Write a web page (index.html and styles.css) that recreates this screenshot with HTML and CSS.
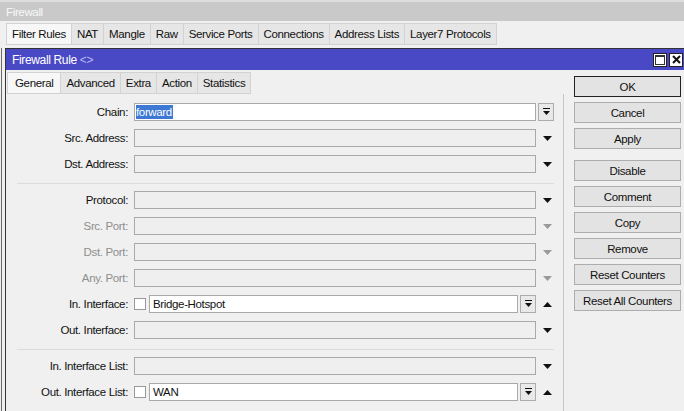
FILE: index.html
```html
<!DOCTYPE html>
<html lang="en">
<head>
    <meta charset="UTF-8">
    <meta name="viewport" content="width=device-width, initial-scale=1.0">
    <title>Firewall</title>
    <link rel="stylesheet" href="styles.css">
</head>
<body>
    <div class="screen">
        <div class="titlebar">Firewall</div>
        <div class="tabs outer-tabs">
            <div class="tab active">Filter Rules</div>
            <div class="tab">NAT</div>
            <div class="tab">Mangle</div>
            <div class="tab">Raw</div>
            <div class="tab">Service Ports</div>
            <div class="tab">Connections</div>
            <div class="tab">Address Lists</div>
            <div class="tab">Layer7 Protocols</div>
        </div>
        <div class="page">
            <div class="rule">
                <div class="rule-title">
                    <span>Firewall Rule <em>&lt;&gt;</em></span>
                    <div class="win-btns">
                        <div class="win-btn max"><i></i></div>
                        <div class="win-btn close">
                            <svg width="9" height="9" viewBox="0 0 9 9"><path d="M1 1L8 8M8 1L1 8" stroke="#111" stroke-width="2"/></svg>
                        </div>
                    </div>
                </div>
                <div class="rule-body">
                    <div class="form">
                        <div class="tabs inner-tabs">
                            <div class="tab active">General</div>
                            <div class="tab">Advanced</div>
                            <div class="tab">Extra</div>
                            <div class="tab">Action</div>
                            <div class="tab">Statistics</div>
                        </div>
                        <div class="fields">
                            <div class="section">
                                <div class="row">
                                    <label>Chain:</label>
                                    <div class="field"><div class="input white"><span class="sel">forward</span></div></div>
                                    <div class="side"><div class="drop"><svg width="9" height="8" viewBox="0 0 9 8"><path d="M1 0.5H8" stroke="#111"/><path d="M1 3H8L4.5 7Z" fill="#111"/></svg></div></div>
                                </div>
                                <div class="row">
                                    <label>Src. Address:</label>
                                    <div class="field"><div class="input"></div></div>
                                    <div class="side"><svg class="arrow" width="9" height="5" viewBox="0 0 9 5"><path d="M0 0H9L4.5 5Z"/></svg></div>
                                </div>
                                <div class="row">
                                    <label>Dst. Address:</label>
                                    <div class="field"><div class="input"></div></div>
                                    <div class="side"><svg class="arrow" width="9" height="5" viewBox="0 0 9 5"><path d="M0 0H9L4.5 5Z"/></svg></div>
                                </div>
                            </div>
                            <div class="sep"></div>
                            <div class="section">
                                <div class="row">
                                    <label>Protocol:</label>
                                    <div class="field"><div class="input"></div></div>
                                    <div class="side"><svg class="arrow" width="9" height="5" viewBox="0 0 9 5"><path d="M0 0H9L4.5 5Z"/></svg></div>
                                </div>
                                <div class="row off">
                                    <label>Src. Port:</label>
                                    <div class="field"><div class="input"></div></div>
                                    <div class="side"><svg class="arrow" width="9" height="5" viewBox="0 0 9 5"><path d="M0 0H9L4.5 5Z"/></svg></div>
                                </div>
                                <div class="row off">
                                    <label>Dst. Port:</label>
                                    <div class="field"><div class="input"></div></div>
                                    <div class="side"><svg class="arrow" width="9" height="5" viewBox="0 0 9 5"><path d="M0 0H9L4.5 5Z"/></svg></div>
                                </div>
                                <div class="row off">
                                    <label>Any. Port:</label>
                                    <div class="field"><div class="input"></div></div>
                                    <div class="side"><svg class="arrow" width="9" height="5" viewBox="0 0 9 5"><path d="M0 0H9L4.5 5Z"/></svg></div>
                                </div>
                                <div class="row">
                                    <label>In. Interface:</label>
                                    <div class="field">
                                        <div class="check"></div>
                                        <div class="input white">Bridge-Hotspot</div>
                                        <div class="drop"><svg width="9" height="8" viewBox="0 0 9 8"><path d="M1 0.5H8" stroke="#111"/><path d="M1 3H8L4.5 7Z" fill="#111"/></svg></div>
                                    </div>
                                    <div class="side"><svg class="arrow" width="9" height="5" viewBox="0 0 9 5"><path d="M0 5H9L4.5 0Z"/></svg></div>
                                </div>
                                <div class="row">
                                    <label>Out. Interface:</label>
                                    <div class="field"><div class="input"></div></div>
                                    <div class="side"><svg class="arrow" width="9" height="5" viewBox="0 0 9 5"><path d="M0 0H9L4.5 5Z"/></svg></div>
                                </div>
                            </div>
                            <div class="sep"></div>
                            <div class="section">
                                <div class="row">
                                    <label>In. Interface List:</label>
                                    <div class="field"><div class="input"></div></div>
                                    <div class="side"><svg class="arrow" width="9" height="5" viewBox="0 0 9 5"><path d="M0 0H9L4.5 5Z"/></svg></div>
                                </div>
                                <div class="row">
                                    <label>Out. Interface List:</label>
                                    <div class="field">
                                        <div class="check"></div>
                                        <div class="input white">WAN</div>
                                        <div class="drop"><svg width="9" height="8" viewBox="0 0 9 8"><path d="M1 0.5H8" stroke="#111"/><path d="M1 3H8L4.5 7Z" fill="#111"/></svg></div>
                                    </div>
                                    <div class="side"><svg class="arrow" width="9" height="5" viewBox="0 0 9 5"><path d="M0 5H9L4.5 0Z"/></svg></div>
                                </div>
                            </div>
                            <div class="sep"></div>
                        </div>
                    </div>
                    <div class="actions">
                        <button class="default">OK</button>
                        <button>Cancel</button>
                        <button>Apply</button>
                        <button class="gap">Disable</button>
                        <button>Comment</button>
                        <button>Copy</button>
                        <button>Remove</button>
                        <button>Reset Counters</button>
                        <button>Reset All Counters</button>
                    </div>
                </div>
            </div>
        </div>
    </div>
</body>
</html>
```

FILE: styles.css
```css
*{
    box-sizing: border-box;
}
body{
    margin: 0;
    background-color: #f0f0f0;
    font-family: 'Liberation Sans', Arial, sans-serif;
    font-size: 11.5px;
    letter-spacing: -0.35px;
    color: #111;
}
.screen{
    width: 684px;
    height: 411px;
    overflow: hidden;
}
.titlebar{
    height: 21px;
    padding: 2px 0 0 6px;
    background-color: #c9c9c9;
    border-top: 2px solid #dedede;
    color: #f8f8f8;
    line-height: 16px;
}
.tabs{
    display: flex;
}
.tab{
    padding: 0 5px;
    border: 1px solid #d2d2d2;
    border-left: none;
    background-color: #e6e6e6;
    line-height: 20px;
    white-space: nowrap;
}
.tab.active{
    background-color: #f7f7f7;
    border-left: 1px solid #d2d2d2;
}
.outer-tabs{
    margin: 2px 0 0 6px;
    height: 22px;
}
.page{
    margin-top: 3px;
    border-left: 1px solid #6a6a6a;
    margin-left: 1px;
    padding-left: 3px;
}
.rule{
    border-top: 1px solid #333;
    border-left: 1px solid #333;
}
.rule-title{
    height: 21px;
    background-color: #4949c6;
    color: #fff;
    font-size: 12px;
    display: flex;
    align-items: center;
    justify-content: space-between;
    padding: 0 1px 0 6px;
}
.rule-title em{
    font-style: normal;
    color: #b8b8f0;
}
.win-btns{
    display: flex;
    gap: 2px;
}
.win-btn{
    width: 14px;
    height: 14px;
    background-color: #fff;
    border: 1px solid #222;
    display: flex;
    align-items: center;
    justify-content: center;
}
.win-btn.max i{
    width: 10px;
    height: 10px;
    border: 1px solid #333;
    border-top-width: 2px;
}
.rule-body{
    display: flex;
    align-items: flex-start;
}
.form{
    width: 558px;
}
.inner-tabs{
    margin: 2px 0 0 1px;
    height: 22px;
}
.inner-tabs .tab.active{
    padding: 0 7px;
}
.fields{
    border-right: 1px solid #c8c8c8;
    padding: 9px 7px 0 2px;
}
.section{
    display: flex;
    flex-direction: column;
    gap: 8px;
}
.sep{
    height: 1px;
    background-color: #dcdcdc;
    margin: 10px 2px 7px 9px;
}
.row{
    display: flex;
    align-items: center;
    height: 18px;
}
.row label{
    width: 120px;
    margin-right: 6px;
    text-align: right;
    white-space: nowrap;
}
.row.off label{
    color: #8e8e8e;
}
.field{
    flex: 1;
    display: flex;
    align-items: center;
    gap: 2px;
    height: 18px;
}
.input{
    flex: 1;
    height: 18px;
    border: 1px solid #a9a9a9;
    background-color: #efefef;
    padding: 0 3px;
    line-height: 16px;
    white-space: nowrap;
}
.input.white{
    background-color: #fff;
}
.sel{
    background-color: #3d78d4;
    color: #fff;
    margin-left: -2px;
    padding: 1px 1px 1px 0;
}
.check{
    width: 12px;
    height: 12px;
    border: 1px solid #9a9a9a;
    background-color: #fff;
    margin-right: 1px;
}
.drop{
    width: 16px;
    height: 18px;
    border: 1px solid #adadad;
    background-color: #e9e9e9;
    display: flex;
    align-items: center;
    justify-content: center;
}
.side{
    width: 18px;
    margin-left: 2px;
    display: flex;
    justify-content: center;
}
.side .drop{
    margin-right: 2px;
}
.arrow{
    fill: #111;
    margin-left: 1px;
}
.row.off .arrow{
    fill: #9a9a9a;
}
.actions{
    width: 107px;
    margin-left: 10px;
    padding-top: 6px;
    display: flex;
    flex-direction: column;
    gap: 5px;
}
.actions button{
    height: 21px;
    border: 1px solid #adadad;
    background-color: #e3e3e3;
    font: inherit;
    letter-spacing: inherit;
    color: #111;
    padding: 0;
}
.actions button.default{
    border-color: #222;
}
.actions button.gap{
    margin-top: 6px;
}
```
